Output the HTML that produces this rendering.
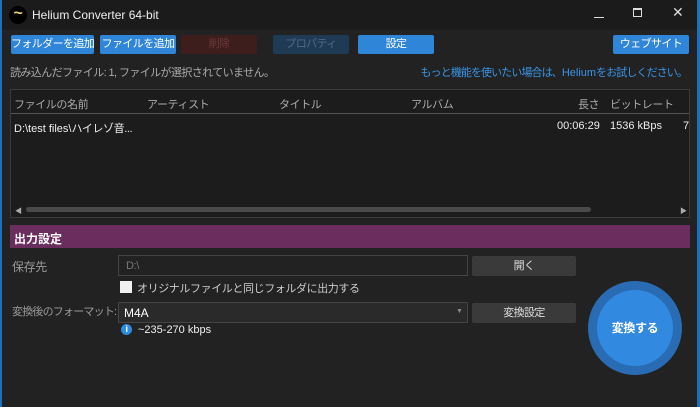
<!DOCTYPE html>
<html><head><meta charset="utf-8"><style>
*{margin:0;padding:0;box-sizing:border-box}
body{width:700px;height:407px;background:#222;overflow:hidden;position:relative;font-family:"Liberation Sans","Noto Sans CJK JP",sans-serif;font-size:11px;letter-spacing:-0.4px;color:#ddd}
.a{position:absolute;white-space:nowrap}
.btn{position:absolute;height:19px;line-height:19px;text-align:center;color:#fff;background:#2f86d8;border-radius:2px;font-size:11px;white-space:nowrap;letter-spacing:-0.6px}
.g{background:#3a3a3a;color:#ddd}
.n{letter-spacing:0}
</style></head><body>
<div class="a" style="left:0;top:0;width:700px;height:30px;background:#1b1b1b"></div>
<div class="a" style="left:0;top:0;width:2px;height:407px;background:#1f6fc0"></div>
<div class="a" style="left:697px;top:0;width:3px;height:407px;background:#1f6fc0"></div>
<div class="a" style="left:9px;top:6px;width:18px;height:18px;border-radius:50%;background:#000;color:#e8d27a;font-size:16px;line-height:16px;text-align:center;font-weight:bold">~</div>
<div class="a" style="left:32px;top:8px;font-size:12px;letter-spacing:0;color:#eee">Helium Converter 64-bit</div>
<div class="a" style="left:594px;top:17px;width:10px;height:1px;background:#ddd"></div>
<div class="a" style="left:633px;top:8px;width:9px;height:9px;border:1px solid #ddd;border-top-width:2px"></div>
<div class="a" style="left:672px;top:4px;font-size:14px;color:#ddd">✕</div>
<div class="btn" style="left:11px;top:35px;width:83px">フォルダーを追加</div>
<div class="btn" style="left:100px;top:35px;width:76px">ファイルを追加</div>
<div class="btn" style="left:181px;top:35px;width:76px;background:#3e1d1d;color:#6d3a3a">削除</div>
<div class="btn" style="left:273px;top:35px;width:76px;background:#1f3a55;color:#4d6a88">プロパティ</div>
<div class="btn" style="left:358px;top:35px;width:76px">設定</div>
<div class="btn" style="left:613px;top:35px;width:76px">ウェブサイト</div>
<div class="a" style="left:10px;top:64px;color:#aaa;letter-spacing:-0.6px">読み込んだファイル: 1, ファイルが選択されていません。</div>
<div class="a" style="right:13px;top:64px;color:#3a95e8;letter-spacing:-0.9px">もっと機能を使いたい場合は、<span class="n">Helium</span>をお試しください。</div>
<div class="a" style="left:10px;top:89px;width:680px;height:129px;background:#1c1c1c;border:1px solid #3a3a3a"></div>
<div class="a" style="left:11px;top:113px;width:678px;height:1px;background:#555"></div>
<div class="a" style="left:14px;top:96px;color:#aaa">ファイルの名前</div>
<div class="a" style="left:147px;top:96px;color:#aaa">アーティスト</div>
<div class="a" style="left:279px;top:96px;color:#aaa">タイトル</div>
<div class="a" style="left:411px;top:96px;color:#aaa">アルバム</div>
<div class="a" style="left:578px;top:96px;color:#aaa">長さ</div>
<div class="a" style="left:610px;top:96px;color:#aaa">ビットレート</div>
<div class="a" style="left:14px;top:120px;color:#eee"><span class="n">D:\test files\</span>ハイレゾ音...</div>
<div class="a n" style="left:557px;top:120px;color:#eee">00:06:29</div>
<div class="a n" style="left:610px;top:120px;color:#eee">1536 kBps</div>
<div class="a" style="left:683px;top:120px;color:#eee">7</div>
<div class="a" style="left:15px;top:206px;color:#aaa;font-size:7px">◀</div>
<div class="a" style="left:26px;top:207px;width:565px;height:5px;border-radius:3px;background:#4a4a4a"></div>
<div class="a" style="left:680px;top:206px;color:#aaa;font-size:7px">▶</div>
<div class="a" style="left:10px;top:225px;width:680px;height:23px;background:#6b2d5e"></div>
<div class="a" style="left:14px;top:230px;color:#fff;font-weight:bold;font-size:12px;letter-spacing:0">出力設定</div>
<div class="a" style="left:12px;top:258px;color:#999;font-size:12px">保存先</div>
<div class="a" style="left:118px;top:255px;width:350px;height:21px;border:1px solid #444;background:#222"></div>
<div class="a" style="left:126px;top:260px;color:#777;font-size:11px">D:\</div>
<div class="btn g" style="left:472px;top:256px;width:104px;height:20px;line-height:20px">開く</div>
<div class="a" style="left:120px;top:281px;width:12px;height:12px;background:#f0f0f0"></div>
<div class="a" style="left:137px;top:280px;color:#ccc">オリジナルファイルと同じフォルダに出力する</div>
<div class="a" style="left:12px;top:303px;color:#999;letter-spacing:-0.8px">変換後のフォーマット:</div>
<div class="a" style="left:118px;top:302px;width:350px;height:21px;border:1px solid #444;background:#2a2a2a"></div>
<div class="a" style="left:124px;top:306px;color:#fff;font-size:12px;letter-spacing:0">M4A</div>
<div class="a" style="left:456px;top:308px;color:#888;font-size:7px">▼</div>
<div class="btn g" style="left:472px;top:303px;width:104px;height:20px;line-height:20px">変換設定</div>
<div class="a" style="left:121px;top:324px;width:11px;height:11px;border-radius:50%;background:#2f8be0;color:#fff;font-size:9px;line-height:11px;text-align:center;font-weight:bold">i</div>
<div class="a n" style="left:138px;top:324px;color:#eee;font-size:11px">~235-270 kbps</div>
<div class="a" style="left:588px;top:281px;width:94px;height:94px;border-radius:50%;background:#2a6cb4"></div>
<div class="a" style="left:597px;top:290px;width:76px;height:76px;border-radius:50%;background:#3189e0;color:#fff;font-weight:bold;text-align:center;line-height:76px;font-size:12px">変換する</div>
</body></html>
